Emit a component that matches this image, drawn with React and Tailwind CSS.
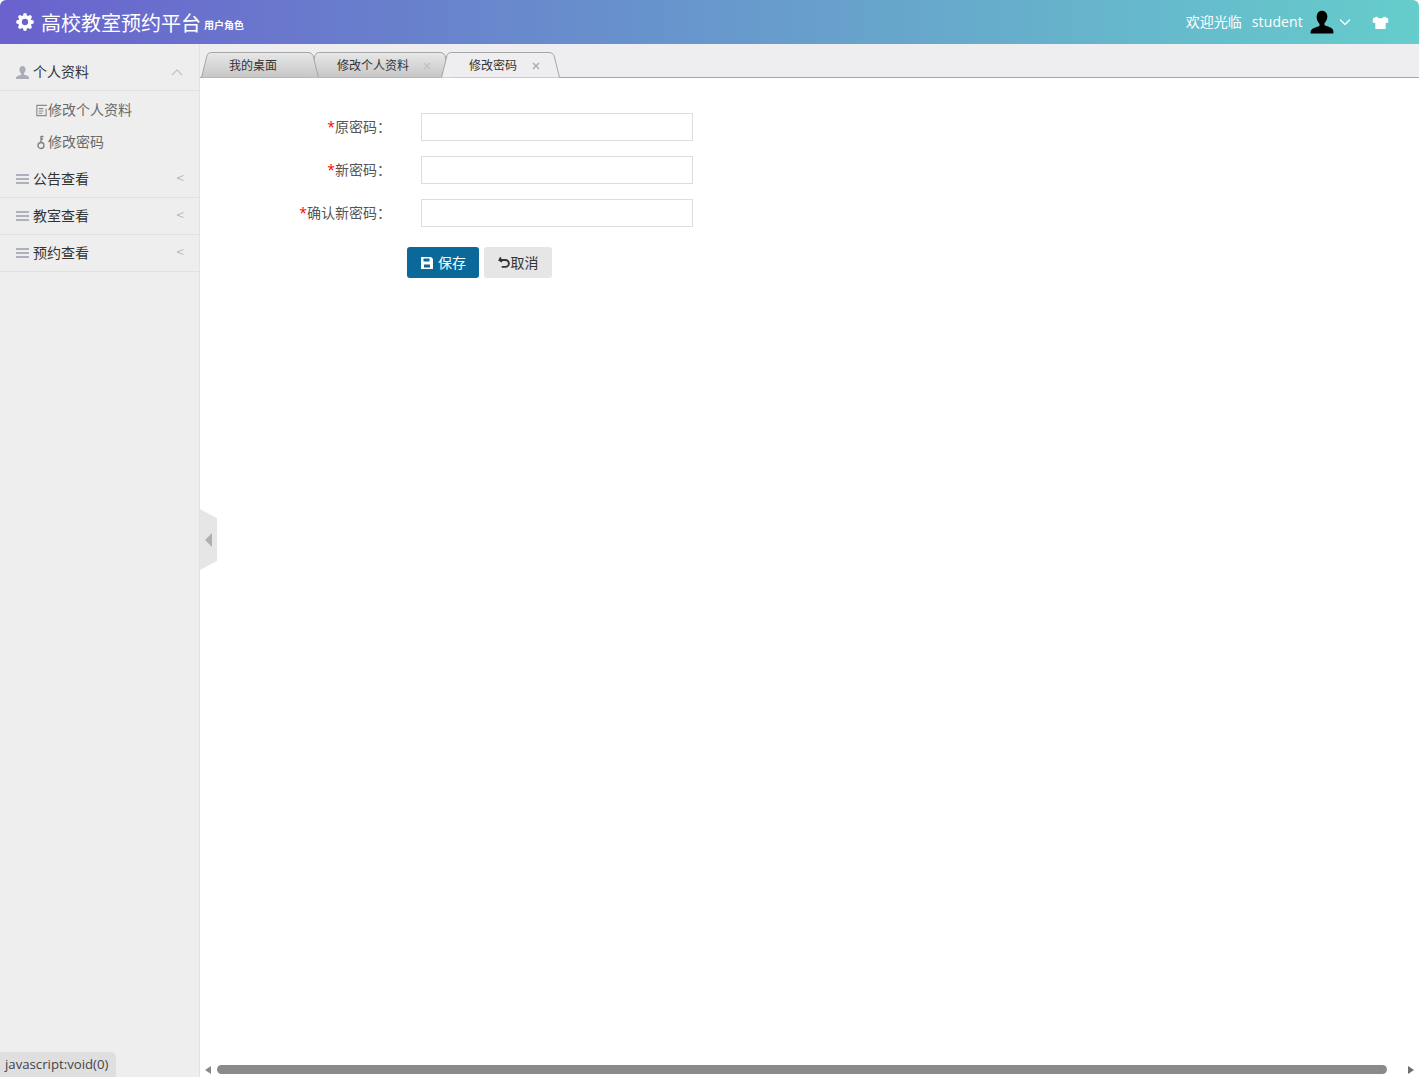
import React from 'react';

const CJK = "font-['Open_Sans','Noto_Sans_CJK_SC',sans-serif]";

const UserIcon = ({ className }) => (
  <svg viewBox="0 0 16 16" className={className} fill="currentColor">
    <path d="M8 1c2 0 3.300 1.500 3.300 3.600 0 1.500-.7 3-1.600 3.800-.3.3-.3 1.300 0 1.600.9.7 5.300 1.200 5.300 3.600V15H1v-.9c0-2.400 4.400-2.900 5.300-3.600.3-.3.3-1.300 0-1.600-.9-.8-1.600-2.300-1.600-3.800C4.700 2.500 6 1 8 1z" />
  </svg>
);

const MenuHead = ({ label, open, user }) => (
  <div className={`flex items-center border-b border-[#e2e2e2] pl-[15px] pr-[15px] ${open ? 'h-[47px] pt-[10px]' : 'h-[37px]'}`}>
    {user ? (
      <UserIcon className="w-[15px] h-[15px] text-[#a8adb8] shrink-0" />
    ) : (
      <span className="flex flex-col gap-[2px] w-[13px] ml-[1px] mr-[1px] shrink-0">
        <span className="h-[2px] bg-[#adb1bb]" />
        <span className="h-[2px] bg-[#adb1bb]" />
        <span className="h-[2px] bg-[#adb1bb]" />
      </span>
    )}
    <span className="ml-[3px] text-[14px] text-[#333333] leading-none">{label}</span>
    <span className="ml-auto">
      {open ? (
        <svg viewBox="0 0 12 8" className="w-[12px] h-[8px] mr-[1px] block" fill="none" stroke="#c4c4c4" strokeWidth="1.300">
          <path d="M1 7l5-5 5 5" />
        </svg>
      ) : (
        <svg viewBox="0 0 8 8" className="w-[8px] h-[8px] mb-[3px] block" fill="none" stroke="#b5b5b5" strokeWidth="1">
          <path d="M7.500 1.500L1 4l6.500 2.500" />
        </svg>
      )}
    </span>
  </div>
);

const SubItem = ({ icon, label }) => (
  <div className="h-[32px] flex items-center pl-[34px] text-[14px] text-[#676a6c]">
    <span className="w-[14px] h-[14px] flex items-center justify-center shrink-0">{icon}</span>
    <span className="leading-none">{label}</span>
  </div>
);

const Tab = ({ label, close, active, width, className }) => (
  <div className={`relative h-[26px] shrink-0 translate-y-[1px] ${className}`} style={{ width }}>
    <svg className="absolute inset-0 w-full h-full" viewBox={`0 0 ${width} 26`}>
      <defs>
        <linearGradient id="tabg" x1="0" y1="0" x2="0" y2="1">
          <stop offset="0" stopColor="#e8e8e8" />
          <stop offset="1" stopColor="#c6c6c6" />
        </linearGradient>
      </defs>
      <path
        d={`M0.500 25.500L6 3.500Q6.800 1 9.500 0.500H${width - 10}Q${width - 7} 1 ${width - 6} 3.500L${width - 0.500} 25.500`}
        fill={active ? '#eeeef0' : 'url(#tabg)'}
        stroke="#a5a5a5"
      />
    </svg>
    <span className="absolute top-[7px] left-[28px] text-[12px] leading-[14px] whitespace-nowrap text-[#333333]">
      {label}
    </span>
    {close && (
      <svg viewBox="0 0 8 8" className="absolute top-[10px] right-[20px] w-[8px] h-[8px]" fill="none" stroke={active ? '#a8a8a8' : '#c2c2c2'} strokeWidth="1.300">
        <path d="M1 1l6 6M7 1L1 7" />
      </svg>
    )}
  </div>
);

const Field = ({ label }) => (
  <div className="flex items-center h-[28px] mb-[15px]">
    <label className="w-[191px] text-right text-[14px] text-[#555555] leading-none whitespace-nowrap">
      <span className="text-[#ff0000]">*</span>{label}：
    </label>
    <input type="text" className="ml-[30px] w-[272px] h-[28px] bg-white border border-[#dddddd] outline-none" />
  </div>
);

export default function App() {
  return (
    <div className={`h-[1077px] w-[1419px] overflow-hidden flex flex-col bg-white ${CJK}`}>
      <header className="h-[44px] shrink-0 flex items-center rounded-t-[6px] bg-[linear-gradient(90deg,#6a62cd,#65cdcb)] pl-[16px] pr-[30px] text-white">
        <svg viewBox="0 0 20 20" className="w-[18px] h-[18px]" fill="none">
          <circle cx="10" cy="10" r="5.500" stroke="#ffffff" strokeWidth="4" />
          <g stroke="#ffffff" strokeWidth="4.200" strokeLinecap="round">
            <path d="M10 2.200v1.500M10 16.300v1.500M2.200 10h1.500M16.300 10h1.500M4.500 4.500l1 1M14.500 14.500l1 1M4.500 15.500l1-1M14.500 5.500l1-1" />
          </g>
        </svg>
        <span className="ml-[7px] mt-[3px] text-[20px] leading-none">高校教室预约平台</span>
        <span className="ml-[3px] mt-[6px] text-[10px] font-bold leading-none">用户角色</span>
        <span className="ml-auto text-[14px] leading-none">欢迎光临</span>
        <span className="ml-[10px] text-[14px] tracking-[0.15px] leading-none">student</span>
        <UserIcon className="ml-[6px] w-[26px] h-[26px] text-black" />
        <svg viewBox="0 0 12 8" className="ml-[4px] w-[12px] h-[8px]" fill="none" stroke="#ffffff" strokeWidth="1.300">
          <path d="M1 1.500l5 5 5-5" />
        </svg>
        <svg viewBox="0 0 18 16" className="ml-[21px] w-[17px] h-[15px]" fill="#ffffff">
          <path d="M5.500 1.500L1 3.500 0.500 8l3 .6V15h11V8.600l3-.6-.5-4.500-4.500-2c-.5 1.500-1.800 2-3.500 2s-3-.5-3.500-2z" />
        </svg>
      </header>

      <div className="flex flex-1 min-h-0">
        <aside className="relative w-[200px] shrink-0 bg-[#eeeeee] border-r border-[#e2e2e2]">
          <MenuHead label="个人资料" open user />
          <div className="pt-[3px]">
            <SubItem
              label="修改个人资料"
              icon={
                <svg viewBox="0 0 14 14" className="w-[13px] h-[13px]" fill="none" stroke="#8a8a8a" strokeWidth="1.200">
                  <path d="M12.500 2V1.500H2v11h10V5M4 5h5M4 7.500h5M4 10h4" />
                </svg>
              }
            />
            <SubItem
              label="修改密码"
              icon={
                <svg viewBox="0 0 10 15" className="w-[10px] h-[15px]" fill="none" stroke="#7d7d7d" strokeWidth="1.300">
                  <circle cx="5" cy="10.500" r="3" />
                  <path d="M5 7.500V1M5 1.500h2.500M5 4h2" />
                </svg>
              }
            />
          </div>
          <div className="h-[3px]" />
          <MenuHead label="公告查看" />
          <MenuHead label="教室查看" />
          <MenuHead label="预约查看" />

          <div className="absolute left-0 bottom-0 h-[25px] w-[116px] flex items-center pl-[5px] rounded-tr-[5px] bg-[#dfdfdf] text-[13.200px] text-[#444444] leading-none">
            javascript:void(0)
          </div>
        </aside>

        <main className="relative flex-1 min-w-0 flex flex-col">
          <div className="h-[34px] shrink-0 flex items-end pl-[1px] bg-[#eeeef0] border-b border-[#a5a5a5]">
            <Tab label="我的桌面" width={118} className="z-10" />
            <Tab label="修改个人资料" close width={142} className="ml-[-10px]" />
            <Tab label="修改密码" close active width={119} className="z-10 ml-[-10px]" />
          </div>

          <form className="pt-[35px]">
            <Field label="原密码" />
            <Field label="新密码" />
            <Field label="确认新密码" />
            <div className="flex ml-[207px] mt-[20px] gap-[5px]">
              <button type="button" className="h-[31px] w-[72px] flex items-center justify-center gap-[4px] rounded-[3px] bg-[#0a6999] text-white text-[14px]">
                <svg viewBox="0 0 14 14" className="w-[14px] h-[14px]" fill="#ffffff">
                  <path fillRule="evenodd" d="M1 1h10l2 2v10H1zM3.500 2.500v3h6v-3zM4 8.500v3h6v-3z" />
                </svg>
                <span>保存</span>
              </button>
              <button type="button" className="h-[31px] w-[68px] flex items-center justify-center rounded-[3px] bg-[#e6e6e6] text-[#333333] text-[14px]">
                <svg viewBox="0 0 14 14" className="w-[13px] h-[13px]" fill="none" stroke="#333333" strokeWidth="2">
                  <path d="M3 1.500L1.500 4.500l3 1.500M2 4.300h6a3.700 3.700 0 010 7.400H4" />
                </svg>
                <span>取消</span>
              </button>
            </div>
          </form>

          {/* sidebar collapse handle */}
          <div className="absolute left-0 top-[465px] w-[17px] h-[61px] bg-[#e6e6e6] [clip-path:polygon(0_0,100%_15%,100%_85%,0_100%)] flex items-center justify-center">
            <span className="w-0 h-0 border-y-[7px] border-y-transparent border-r-[7px] border-r-[#b0b0b0] mr-[1px]" />
          </div>

          {/* horizontal scrollbar */}
          <div className="mt-auto h-[15px] shrink-0 flex items-center pl-[5px] pr-[5px]">
            <span className="w-0 h-0 border-y-[4px] border-y-transparent border-r-[6px] border-r-[#8a8a8a]" />
            <span className="ml-[6px] h-[9px] w-[1170px] rounded-full bg-[#8a8a8a]" />
            <span className="ml-auto w-0 h-0 border-y-[4px] border-y-transparent border-l-[6px] border-l-[#6e6e6e]" />
          </div>
        </main>
      </div>
    </div>
  );
}
